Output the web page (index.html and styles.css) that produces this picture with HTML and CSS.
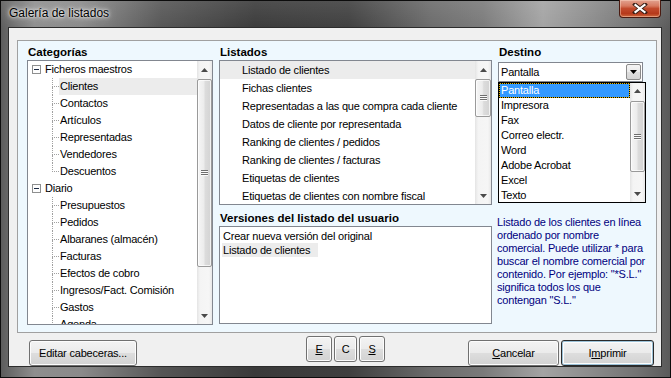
FILE: index.html
```html
<!DOCTYPE html>
<html lang="es">
<head>
<meta charset="utf-8">
<title>Galería de listados</title>
<link rel="stylesheet" href="styles.css">
</head>
<body>
<div class="window">
  <div class="titlebar">
    <span class="title">Galería de listados</span>
    <div class="close">
      <svg width="16" height="11" viewBox="0 0 16 11"><path d="M3 1.5 L13 9.5 M13 1.5 L3 9.5" stroke="#3a2018" stroke-width="4" stroke-linecap="square"/><path d="M3.5 2 L12.5 9 M12.5 2 L3.5 9" stroke="#fff" stroke-width="2.2" stroke-linecap="square"/></svg>
    </div>
  </div>
  <div class="client">
    <div class="panel">
      <div class="col">
        <div class="label">Categorías</div>
        <div class="box tree">
          <div class="items">
            <div class="trow root"><span class="exp"><svg width="9" height="9"><rect x="0.5" y="0.5" width="8" height="8" fill="#fdfdfd" stroke="#8e8f8f"/><path d="M2 4.5h5" stroke="#1b2a44"/></svg></span><span class="tlabel">Ficheros maestros</span></div>
            <div class="trow child"><span class="conn"><span class="conn-top"></span><span class="conn-bot"></span></span><span class="tlabel hl">Clientes</span></div>
            <div class="trow child"><span class="conn"><span class="conn-top"></span><span class="conn-bot"></span></span><span class="tlabel">Contactos</span></div>
            <div class="trow child"><span class="conn"><span class="conn-top"></span><span class="conn-bot"></span></span><span class="tlabel">Artículos</span></div>
            <div class="trow child"><span class="conn"><span class="conn-top"></span><span class="conn-bot"></span></span><span class="tlabel">Representadas</span></div>
            <div class="trow child"><span class="conn"><span class="conn-top"></span><span class="conn-bot"></span></span><span class="tlabel">Vendedores</span></div>
            <div class="trow child last"><span class="conn"><span class="conn-top"></span><span class="conn-bot"></span></span><span class="tlabel">Descuentos</span></div>
            <div class="trow root"><span class="exp"><svg width="9" height="9"><rect x="0.5" y="0.5" width="8" height="8" fill="#fdfdfd" stroke="#8e8f8f"/><path d="M2 4.5h5" stroke="#1b2a44"/></svg></span><span class="tlabel">Diario</span></div>
            <div class="trow child"><span class="conn"><span class="conn-top"></span><span class="conn-bot"></span></span><span class="tlabel">Presupuestos</span></div>
            <div class="trow child"><span class="conn"><span class="conn-top"></span><span class="conn-bot"></span></span><span class="tlabel">Pedidos</span></div>
            <div class="trow child"><span class="conn"><span class="conn-top"></span><span class="conn-bot"></span></span><span class="tlabel">Albaranes (almacén)</span></div>
            <div class="trow child"><span class="conn"><span class="conn-top"></span><span class="conn-bot"></span></span><span class="tlabel">Facturas</span></div>
            <div class="trow child"><span class="conn"><span class="conn-top"></span><span class="conn-bot"></span></span><span class="tlabel">Efectos de cobro</span></div>
            <div class="trow child"><span class="conn"><span class="conn-top"></span><span class="conn-bot"></span></span><span class="tlabel">Ingresos/Fact. Comisión</span></div>
            <div class="trow child"><span class="conn"><span class="conn-top"></span><span class="conn-bot"></span></span><span class="tlabel">Gastos</span></div>
            <div class="trow child"><span class="conn"><span class="conn-top"></span><span class="conn-bot"></span></span><span class="tlabel">Agenda</span></div>
          </div>
          <div class="vscroll sb-tree">
            <div class="sb-btn"><svg width="7" height="4"><path d="M0 4 L3.5 0 L7 4Z" fill="#4a4a4a"/></svg></div>
            <div class="thumb"><span class="grip"></span></div>
            <div class="sb-rest"></div>
            <div class="sb-btn"><svg width="7" height="4"><path d="M0 0 L3.5 4 L7 0Z" fill="#4a4a4a"/></svg></div>
          </div>
        </div>
      </div>

      <div class="col">
        <div class="label">Listados</div>
        <div class="box list">
          <div class="items">
            <div class="lrow hl">Listado de clientes</div>
            <div class="lrow">Fichas clientes</div>
            <div class="lrow">Representadas a las que compra cada cliente</div>
            <div class="lrow">Datos de cliente por representada</div>
            <div class="lrow">Ranking de clientes / pedidos</div>
            <div class="lrow">Ranking de clientes / facturas</div>
            <div class="lrow">Etiquetas de clientes</div>
            <div class="lrow">Etiquetas de clientes con nombre fiscal</div>
          </div>
          <div class="vscroll sb-list">
            <div class="sb-btn"><svg width="7" height="4"><path d="M0 4 L3.5 0 L7 4Z" fill="#4a4a4a"/></svg></div>
            <div class="thumb"><span class="grip"></span></div>
            <div class="sb-rest"></div>
            <div class="sb-btn"><svg width="7" height="4"><path d="M0 0 L3.5 4 L7 0Z" fill="#4a4a4a"/></svg></div>
          </div>
        </div>
        <div class="label label2">Versiones del listado del usuario</div>
        <div class="box versions">
          <div class="vrow">Crear nueva versión del original</div>
          <div class="vrow"><span class="hl vsel">Listado de clientes</span></div>
        </div>
      </div>

      <div class="col">
        <div class="label">Destino</div>
        <div class="combo">
          <span class="combo-text">Pantalla</span>
          <span class="combo-btn"><svg width="7" height="4"><path d="M0 0 L3.5 4 L7 0Z" fill="#000"/></svg></span>
        </div>
        <div class="box droplist">
          <div class="items">
            <div class="drow dsel">Pantalla</div>
            <div class="drow">Impresora</div>
            <div class="drow">Fax</div>
            <div class="drow">Correo electr.</div>
            <div class="drow">Word</div>
            <div class="drow">Adobe Acrobat</div>
            <div class="drow">Excel</div>
            <div class="drow">Texto</div>
          </div>
          <div class="vscroll sb-drop">
            <div class="sb-btn"><svg width="7" height="4"><path d="M0 4 L3.5 0 L7 4Z" fill="#4a4a4a"/></svg></div>
            <div class="thumb"><span class="grip"></span></div>
            <div class="sb-rest"></div>
            <div class="sb-btn"><svg width="7" height="4"><path d="M0 0 L3.5 4 L7 0Z" fill="#4a4a4a"/></svg></div>
          </div>
        </div>
        <p class="desc">Listado de los clientes en línea<br>ordenado por nombre<br>comercial. Puede utilizar * para<br>buscar el nombre comercial por<br>contenido. Por ejemplo: "*S.L."<br>significa todos los que<br>contengan "S.L."</p>
      </div>
    </div>

    <div class="buttons">
      <div class="btn b-edit">Editar cabeceras...</div>
      <div class="ecs">
        <div class="btn b-sq"><u>E</u></div>
        <div class="btn b-c">C</div>
        <div class="btn b-sq"><u>S</u></div>
      </div>
      <div class="btn b-cancel"><span><u>C</u>ancelar</span></div>
      <div class="btn b-print"><span>I<u>m</u>primir</span></div>
    </div>
  </div>
</div>
</body>
</html>
```

FILE: styles.css
```css
* { box-sizing: border-box; }
html, body { margin: 0; padding: 0; }
body {
  width: 671px;
  height: 378px;
  overflow: hidden;
  background: #000;
  font-family: "Liberation Sans", Arial, sans-serif;
  font-size: 11px;
  letter-spacing: -0.2px;
  color: #000;
}

.window {
  width: 671px;
  height: 378px;
  border: 1px solid #0c0c0c;
  padding: 0 8px 10px 7px;
  display: flex;
  flex-direction: column;
  background:
    linear-gradient(180deg, rgba(255,255,255,0.10) 0, rgba(255,255,255,0) 30px),
    linear-gradient(90deg, #5c5c5c 0%, #8e8e8e 5%, #8a8a8a 12%, #555 24%, #3a3a3a 38%, #3f3f3f 52%, #6a6a6a 64%, #7a7a7a 72%, #a3a3a3 81%, #8c8c8c 88%, #737373 95%, #5a5a5a 100%);
}

.titlebar {
  height: 26px;
  display: flex;
  align-items: flex-start;
}
.title {
  margin: 5px 0 0 1px;
  font-size: 12px;
  line-height: 14px;
  letter-spacing: 0;
  color: #000;
  text-shadow: 0 0 4px rgba(255,255,255,0.9), 0 0 8px rgba(255,255,255,0.7), 0 0 2px rgba(255,255,255,0.8);
}
.close {
  margin: -1px 1px 0 auto;
  width: 42px;
  height: 18px;
  border: 1px solid #4a1a10;
  border-top: none;
  border-radius: 0 0 4px 4px;
  background: linear-gradient(180deg, #e2a290 0%, #d77a60 35%, #c24a2c 50%, #b6391b 80%, #cf6a3e 100%);
  box-shadow: inset 0 0 0 1px rgba(255,220,200,0.45);
  display: flex;
  align-items: center;
  justify-content: center;
}
.close svg { display: block; }

.client {
  flex: 1;
  background: #f0f0f0;
  border: 1px solid #2c2c2c;
  padding: 12px 0 0 8px;
  display: flex;
  flex-direction: column;
}

.panel {
  width: 640px;
  height: 293px;
  border: 1px solid #a0a0a0;
  background: #eef8fe;
  padding: 3px 0 0 9px;
  display: grid;
  grid-template-columns: 186px 273px 156px;
  column-gap: 6px;
  align-items: start;
}
.col { display: flex; flex-direction: column; }
.label {
  font-weight: bold;
  font-size: 11.5px;
  letter-spacing: 0;
  line-height: 16px;
  height: 16px;
  padding-left: 1px;
  white-space: nowrap;
}
.label2 { height: 21px; padding-top: 5px; line-height: 16px; }

.box {
  background: #fff;
  border: 1px solid #828790;
  display: flex;
  overflow: hidden;
}
.items { flex: 1; overflow: hidden; min-width: 0; }

/* tree */
.tree { height: 265px; }
.trow { height: 17px; display: flex; white-space: nowrap; }
.trow.root { padding-left: 4px; align-items: center; }
.exp { width: 9px; height: 9px; margin-right: 4px; display: block; }
.exp svg { display: block; }
.trow.child { padding-left: 24px; }
.conn { width: 7px; display: flex; flex-direction: column; }
.conn-top { height: 9px; border-left: 1px dotted #a0a0a0; border-bottom: 1px dotted #a0a0a0; }
.conn-bot { flex: 1; border-left: 1px dotted #a0a0a0; }
.last .conn-bot { border-left-color: transparent; }
.tlabel { line-height: 17px; flex: 1; }
.child .tlabel { padding-left: 1px; }
.hl { background: #ececec; }

/* list */
.list { height: 145px; }
.lrow { height: 18px; line-height: 18px; padding-left: 22px; white-space: nowrap; }

.versions {
  height: 98px;
  flex-direction: column;
  padding: 2px 0 0 3px;
}
.vrow { height: 14px; line-height: 14px; white-space: nowrap; }
.vsel { display: inline-block; width: 96px; margin-left: -1px; padding-left: 1px; }

/* scrollbars */
.vscroll {
  display: flex;
  flex-direction: column;
  background: linear-gradient(90deg, #e4e4e4 0%, #f4f4f4 20%, #f6f6f6 80%, #e8e8e8 100%);
}
.sb-tree { width: 15px; }
.sb-list { width: 16px; }
.sb-drop { width: 15px; }
.sb-btn {
  height: 17px;
  display: flex;
  align-items: center;
  justify-content: center;
}
.sb-btn svg { display: block; }
.thumb {
  margin: 1px 0 0 0;
  border: 1px solid #9a9a9a;
  border-radius: 2px;
  background: linear-gradient(90deg, #f6f6f6 0%, #ececec 45%, #dcdcdc 55%, #d3d3d3 100%);
  box-shadow: inset 0 0 0 1px rgba(255,255,255,0.7);
  display: flex;
  align-items: center;
  justify-content: center;
}
.sb-tree .thumb { height: 188px; }
.sb-list .thumb { height: 38px; }
.sb-drop .thumb { height: 71px; margin-top: 2px; }
.sb-drop .sb-btn { height: 16px; }
.sb-rest { flex: 1; }
.grip {
  width: 7px;
  height: 6px;
  background: repeating-linear-gradient(180deg, #6e6e6e 0 1px, #fafafa 1px 2px);
}

/* combo */
.combo {
  margin-top: 2px;
  width: 145px;
  height: 20px;
  background: #fff;
  border: 1px solid #828790;
  display: flex;
  align-items: center;
  padding: 0 1px 0 2px;
}
.combo-text { flex: 1; }
.combo-btn {
  width: 15px;
  height: 16px;
  border: 1px solid #8a8a8a;
  border-radius: 2px;
  background: linear-gradient(180deg, #f4f4f4 0%, #ebebeb 50%, #dedede 51%, #d4d4d4 100%);
  display: flex;
  align-items: center;
  justify-content: center;
}
.combo-btn svg { display: block; }

.droplist {
  width: 148px;
  height: 121px;
  border-color: #000;
}
.drow { height: 15px; line-height: 15px; padding-left: 2px; white-space: nowrap; }
.dsel {
  color: #fff;
  border: 1px dotted #000;
  padding-left: 1px;
  line-height: 13px;
  background: linear-gradient(#3399ff, #3399ff) padding-box, linear-gradient(#e6b800, #e6b800) border-box;
}

.desc {
  margin: 13px 0 0 -1px;
  font-size: 11px;
  line-height: 13px;
  color: #000080;
  white-space: nowrap;
}

/* buttons */
.buttons {
  display: flex;
  align-items: flex-start;
  margin-top: 7px;
  padding-left: 12px;
}
.btn {
  height: 26px;
  border: 1px solid #707070;
  border-radius: 3px;
  background: linear-gradient(180deg, #f3f3f3 0%, #ebebeb 48%, #dddddd 52%, #d2d2d2 100%);
  box-shadow: inset 0 0 0 1px #fcfcfc;
  display: flex;
  align-items: center;
  justify-content: center;
  white-space: nowrap;
}
.b-edit { width: 108px; }
.ecs { display: flex; gap: 2px; margin: -4px 0 0 169px; }
.b-sq { width: 26px; }
.b-c { width: 23px; }
.b-cancel { width: 91px; margin-left: auto; }
.b-print {
  width: 93px;
  margin: 0 7px 0 2px;
  border-color: #2a2a2a;
  box-shadow: inset 0 0 0 1px #9cc2d8, inset 0 0 0 2px #fcfcfc;
}
```
